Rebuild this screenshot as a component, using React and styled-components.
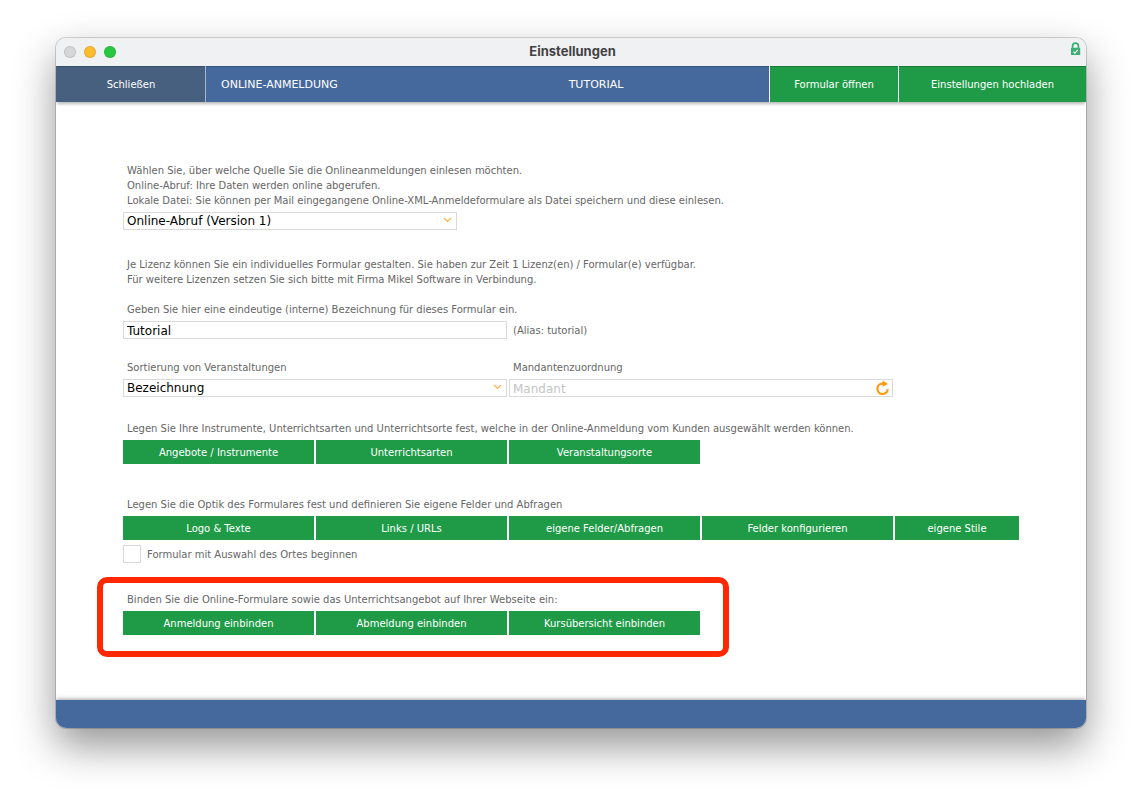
import React from "react";
import styled, { createGlobalStyle } from "styled-components";

const color = {
  blue: "#45699c",
  slate: "#48607f",
  green: "#1f9b48",
  text: "#666666",
  line: "#d9d9d9",
  orange: "#ff9a0a",
};

const GlobalStyle = createGlobalStyle`
  * { box-sizing: border-box; }
  body {
    margin: 0;
    background: #ffffff;
    color: ${color.text};
    font: 10px/15px Verdana, "DejaVu Sans", sans-serif;
  }
  button, input, select { font-family: inherit; }
`;

const Desktop = styled.div`
  display: flex;
  min-height: 100vh;
  padding: 38px 56px 74px;
`;

const Window = styled.div`
  flex: 1;
  min-width: 0;
  display: flex;
  flex-direction: column;
  overflow: hidden;
  border-radius: 10px;
  background: #ffffff;
  box-shadow: 0 0 0 1px rgba(0, 0, 0, 0.16), 0 18px 40px rgba(0, 0, 0, 0.42);
`;

const TitleBar = styled.header`
  display: grid;
  grid-template-columns: 1fr auto 1fr;
  align-items: center;
  height: 28px;
  padding: 0 5px 0 8px;
  background: #f0f1f3;
`;

const Lights = styled.div`
  display: flex;
  gap: 8px;
`;

const Light = styled.button`
  width: 12px;
  height: 12px;
  padding: 0;
  border: 1px solid rgba(0, 0, 0, 0.1);
  border-radius: 50%;
  background: ${(p) => p.$fill};
`;

const WindowTitle = styled.h1`
  margin: 0;
  padding-bottom: 2px;
  color: #414244;
  font: bold 13px/16px Inter, sans-serif;
`;

const LockIcon = styled.svg`
  justify-self: end;
  align-self: start;
  margin-top: 4px;
`;

const Toolbar = styled.nav`
  display: grid;
  grid-template-columns: 149px 1fr 129px 188px;
  height: 36px;
  background: ${color.blue};
  box-shadow: 0 3px 3px -1px rgba(0, 0, 0, 0.28);
`;

const ToolButton = styled.button`
  padding: 0;
  border: 0;
  border-left: 1px solid ${(p) => (p.$muted ? color.slate : "#ffffff")};
  background: ${(p) => (p.$muted ? color.slate : color.green)};
  box-shadow: inset 0 1px rgba(0, 0, 0, 0.2);
  color: #ffffff;
  font-size: 10px;
`;

const Headings = styled.div`
  display: grid;
  grid-template-columns: 202px 1fr;
  align-items: center;
  padding-left: 15px;
  border-left: 1px solid #a5b5cc;
  box-shadow: inset 0 1px rgba(0, 0, 0, 0.2);
  color: #ffffff;
  font-size: 11px;
`;

const Subject = styled.span`
  text-align: center;
`;

const Content = styled.main`
  flex: 1;
  padding: 61px 67px 65px;
`;

const Section = styled.section`
  position: relative;
  display: flex;
  flex-direction: column;
  gap: 4px;
  margin-bottom: ${(p) => p.$after || 0}px;
`;

const Marker = styled.div`
  position: absolute;
  inset: -15px auto -22px -26px;
  width: 632px;
  border: 6px solid #ff2800;
  border-radius: 10px;
  pointer-events: none;
`;

const Note = styled.p`
  margin: 0;
  padding-left: 4px;
`;

const Caption = styled.label`
  padding-left: 4px;
`;

const FieldRow = styled.div`
  display: flex;
  align-items: center;
  gap: 2px;
`;

const FieldColumn = styled.div`
  flex: 0 1 384px;
  display: flex;
  flex-direction: column;
  gap: 4px;
`;

const FieldBox = styled.div`
  position: relative;
  width: 100%;
  max-width: ${(p) => (p.$narrow ? 334 : 384)}px;
`;

const fieldStyle = `
  display: block;
  width: 100%;
  height: 18px;
  padding: 1px 3px 0;
  border: 1px solid ${color.line};
  border-radius: 0;
  background: #ffffff;
  color: #000000;
  font-size: 12px;
  line-height: 15px;
`;

const TextInput = styled.input`
  ${fieldStyle}
  &::placeholder { color: #c4c4c4; opacity: 1; }
`;

const Select = styled.select`
  ${fieldStyle}
  appearance: none;
`;

const Chevron = styled.svg`
  position: absolute;
  top: 5px;
  right: 5px;
  pointer-events: none;
`;

const Reload = styled.button`
  position: absolute;
  top: 1px;
  right: 2px;
  width: 16px;
  height: 16px;
  padding: 0;
  border: 0;
  background: none;
  svg { display: block; }
`;

const ButtonRow = styled.div`
  display: flex;
  gap: 2px;
`;

const ActionButton = styled.button`
  flex: 0 1 ${(p) => (p.$small ? 124 : 191)}px;
  height: 24px;
  padding: 0;
  border: 0;
  background: ${color.green};
  color: #ffffff;
  font-size: 10px;
`;

const CheckRow = styled.label`
  display: flex;
  align-items: center;
  gap: 6px;
  padding-top: 1px;
`;

const CheckBox = styled.input`
  appearance: none;
  width: 18px;
  height: 18px;
  margin: 0;
  border: 1px solid ${color.line};
  background: #ffffff;
`;

const StatusBar = styled.footer`
  height: 28px;
  background: ${color.blue};
  box-shadow: 0 -1px 4px rgba(0, 0, 0, 0.35);
`;

function Dropdown({ id, value, narrow, label }) {
  return (
    <FieldBox $narrow={narrow}>
      <Select id={id} aria-label={label} defaultValue={value}>
        <option>{value}</option>
      </Select>
      <Chevron width="9" height="6" viewBox="0 0 9 6" aria-hidden="true">
        <path d="M1 1l3.5 3.5L8 1" fill="none" stroke="#ffb14a" strokeWidth="1.2" />
      </Chevron>
    </FieldBox>
  );
}

function Actions({ items }) {
  return (
    <ButtonRow>
      {items.map((item, i) => (
        <ActionButton key={item} type="button" $small={i === 4}>
          {item}
        </ActionButton>
      ))}
    </ButtonRow>
  );
}

export default function App() {
  return (
    <Desktop>
      <GlobalStyle />
      <Window>
        <TitleBar>
          <Lights>
            <Light type="button" aria-label="Fenster schließen" $fill="#d6d7d9" />
            <Light type="button" aria-label="Minimieren" $fill="#fdbc2e" />
            <Light type="button" aria-label="Maximieren" $fill="#28c840" />
          </Lights>
          <WindowTitle>Einstellungen</WindowTitle>
          <LockIcon width="11" height="14" viewBox="0 0 11 14" aria-hidden="true">
            <path d="M2.6 7V4a2.9 2.9 0 0 1 5.8 0v3" fill="none" stroke="#3cae76" strokeWidth="1.7" />
            <path d="M1 5.7h9.2V13H1z" fill="#3cae76" />
            <path d="M3.4 9.6l1.5 1.5 2.9-3.2" fill="none" stroke="#ffffff" strokeWidth="1.1" />
          </LockIcon>
        </TitleBar>

        <Toolbar>
          <ToolButton type="button" $muted>Schließen</ToolButton>
          <Headings>
            <span>ONLINE-ANMELDUNG</span>
            <Subject>TUTORIAL</Subject>
          </Headings>
          <ToolButton type="button">Formular öffnen</ToolButton>
          <ToolButton type="button">Einstellungen hochladen</ToolButton>
        </Toolbar>

        <Content>
          <Section $after={27}>
            <Note>
              Wählen Sie, über welche Quelle Sie die Onlineanmeldungen einlesen möchten.
              <br />
              Online-Abruf: Ihre Daten werden online abgerufen.
              <br />
              Lokale Datei: Sie können per Mail eingegangene Online-XML-Anmeldeformulare als Datei speichern und diese einlesen.
            </Note>
            <Dropdown id="source" label="Quelle" value="Online-Abruf (Version 1)" narrow />
          </Section>

          <Section $after={15}>
            <Note>
              Je Lizenz können Sie ein individuelles Formular gestalten. Sie haben zur Zeit 1 Lizenz(en) / Formular(e) verfügbar.
              <br />
              Für weitere Lizenzen setzen Sie sich bitte mit Firma Mikel Software in Verbindung.
            </Note>
          </Section>

          <Section $after={21}>
            <Caption htmlFor="name">
              Geben Sie hier eine eindeutige (interne) Bezeichnung für dieses Formular ein.
            </Caption>
            <FieldRow>
              <FieldBox>
                <TextInput id="name" defaultValue="Tutorial" />
              </FieldBox>
              <Note>(Alias: tutorial)</Note>
            </FieldRow>
          </Section>

          <Section $after={24}>
            <FieldRow>
              <FieldColumn>
                <Caption htmlFor="sort">Sortierung von Veranstaltungen</Caption>
                <Dropdown id="sort" value="Bezeichnung" />
              </FieldColumn>
              <FieldColumn>
                <Caption htmlFor="client">Mandantenzuordnung</Caption>
                <FieldBox>
                  <TextInput id="client" placeholder="Mandant" />
                  <Reload type="button" aria-label="Mandanten neu laden">
                    <svg width="16" height="16" viewBox="0 0 16 16" aria-hidden="true">
                      <path d="M9.5 3.6H7.5a5.2 5.2 0 1 0 5.3 5.6" fill="none" stroke={color.orange} strokeWidth="2.2" />
                      <path d="M7.6 0.6l5.4 3.5-5.4 2.6z" fill={color.orange} />
                    </svg>
                  </Reload>
                </FieldBox>
              </FieldColumn>
            </FieldRow>
          </Section>

          <Section $after={33}>
            <Note>
              Legen Sie Ihre Instrumente, Unterrichtsarten und Unterrichtsorte fest, welche in der Online-Anmeldung vom Kunden ausgewählt werden können.
            </Note>
            <Actions items={["Angebote / Instrumente", "Unterrichtsarten", "Veranstaltungsorte"]} />
          </Section>

          <Section $after={29}>
            <Note>Legen Sie die Optik des Formulares fest und definieren Sie eigene Felder und Abfragen</Note>
            <Actions
              items={["Logo & Texte", "Links / URLs", "eigene Felder/Abfragen", "Felder konfigurieren", "eigene Stile"]}
            />
            <CheckRow>
              <CheckBox type="checkbox" />
              Formular mit Auswahl des Ortes beginnen
            </CheckRow>
          </Section>

          <Section>
            <Note>Binden Sie die Online-Formulare sowie das Unterrichtsangebot auf Ihrer Webseite ein:</Note>
            <Actions items={["Anmeldung einbinden", "Abmeldung einbinden", "Kursübersicht einbinden"]} />
            <Marker />
          </Section>
        </Content>
        <StatusBar />
      </Window>
    </Desktop>
  );
}
